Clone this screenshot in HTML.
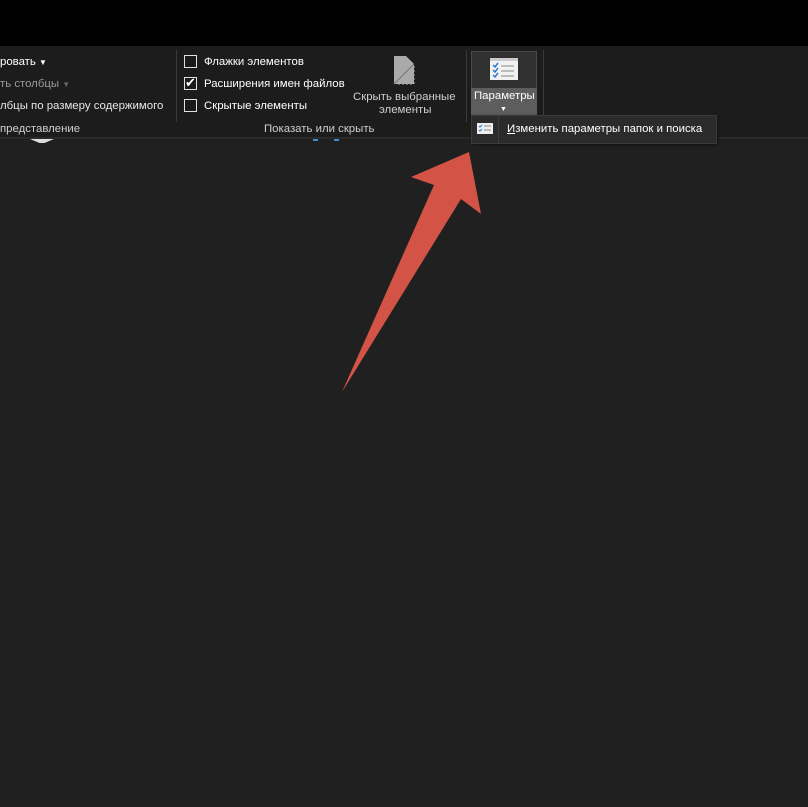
<!DOCTYPE html>
<html><head><meta charset="utf-8"><style>
*{margin:0;padding:0;box-sizing:border-box}
body{width:808px;height:807px;background:#202020;position:relative;overflow:hidden;font-family:"Liberation Sans","DejaVu Sans",sans-serif;font-size:11.4px;color:#fff}
.t{position:absolute;white-space:nowrap;line-height:14px}
.cb{position:absolute;width:13px;height:13px;border:1px solid #e0e0e0;background:#1a1a1a}
</style></head><body>
<div style="position:absolute;left:0;top:0;width:808px;height:46px;background:#000"></div>
<div style="position:absolute;left:0;top:46px;width:808px;height:91px;background:#1c1c1c"></div>
<div style="position:absolute;left:0;top:137px;width:808px;height:2px;background:#2a2a2a"></div>
<div style="position:absolute;left:176px;top:50px;width:1px;height:72px;background:#3a3a3a"></div>
<div style="position:absolute;left:466px;top:50px;width:1px;height:72px;background:#3a3a3a"></div>
<div style="position:absolute;left:543px;top:50px;width:1px;height:72px;background:#3a3a3a"></div>

<div class="t" style="left:0;top:55px">ровать <span style="font-size:8px">▼</span></div>
<div class="t" style="left:0;top:77px;color:#9a9a9a">ть столбцы <span style="font-size:8px;color:#666">▼</span></div>
<div class="t" style="left:0;top:99px;color:#e6e6e6">лбцы по размеру содержимого</div>
<div class="t" style="left:0;top:122px;color:#cfcfcf">представление</div>
<div style="position:absolute;left:30px;top:139px;width:24px;height:4px;background:#ddd;clip-path:polygon(0 0,100% 0,60% 100%,40% 100%)"></div>

<div class="cb" style="left:184px;top:55px"></div>
<div class="t" style="left:204px;top:55px">Флажки элементов</div>
<div class="cb" style="left:184px;top:77px"></div>
<div class="t" style="left:185px;top:76px;font-size:13px">✔</div>
<div class="t" style="left:204px;top:77px">Расширения имен файлов</div>
<div class="cb" style="left:184px;top:99px"></div>
<div class="t" style="left:204px;top:99px">Скрытые элементы</div>
<div class="t" style="left:264px;top:122px;color:#cfcfcf">Показать или скрыть</div>
<div style="position:absolute;left:313px;top:139px;width:5px;height:2px;background:#3c8dd0"></div>
<div style="position:absolute;left:334px;top:139px;width:5px;height:2px;background:#3c8dd0"></div>

<svg style="position:absolute;left:392px;top:55px" width="24" height="30"><path d="M2 1H14L22 9V29H2Z" fill="#aaa"/><path d="M2 29L22 9" stroke="#777" fill="none"/><path d="M22 11V29H4" stroke="#aaa" stroke-dasharray="2,2" fill="none"/></svg>
<div class="t" style="left:353px;top:90px;color:#cfcfcf">Скрыть выбранные</div>
<div class="t" style="left:379px;top:103px;color:#cfcfcf">элементы</div>

<div style="position:absolute;left:471px;top:51px;width:66px;height:38px;background:#303030;border:1px solid #4a4a4a;border-bottom:none"></div>
<div style="position:absolute;left:471px;top:88px;width:66px;height:27px;background:#5d5d5d"></div>
<svg style="position:absolute;left:490px;top:58px" width="28" height="22"><rect x="0" y="0" width="28" height="22" fill="#f2f2f2"/><rect x="0" y="0" width="28" height="3" fill="#ccc"/><g stroke="#2a7ad0" stroke-width="1.5" fill="none"><path d="M3 7l2 2 3-4M3 12l2 2 3-4M3 17l2 2 3-4"/></g><g stroke="#888"><path d="M11 8H24M11 13H24M11 18H24"/></g></svg>
<div class="t" style="left:474px;top:89px">Параметры</div>
<div class="t" style="left:500px;top:103px;font-size:7px">▼</div>

<div style="position:absolute;left:471px;top:115px;width:246px;height:29px;background:#2b2b2b;border:1px solid #3a3a3a;box-shadow:1px 1px 2px #111"></div>
<div style="position:absolute;left:498px;top:116px;width:1px;height:27px;background:#3c3c3c"></div>
<svg style="position:absolute;left:477px;top:123px" width="16" height="11"><rect width="16" height="11" fill="#eee"/><path d="M2 3l1 1 2-2M2 7l1 1 2-2" stroke="#2a7ad0" fill="none"/><path d="M7 3H14M7 7H14" stroke="#888"/></svg>
<div class="t" style="left:507px;top:122px"><u>И</u>зменить параметры папок и поиска</div>

<svg style="position:absolute;left:0;top:0" width="808" height="807"><polygon points="469,152 481,214 461,199 342,392 434,185 411,177" fill="#d35446"/></svg>
</body></html>
